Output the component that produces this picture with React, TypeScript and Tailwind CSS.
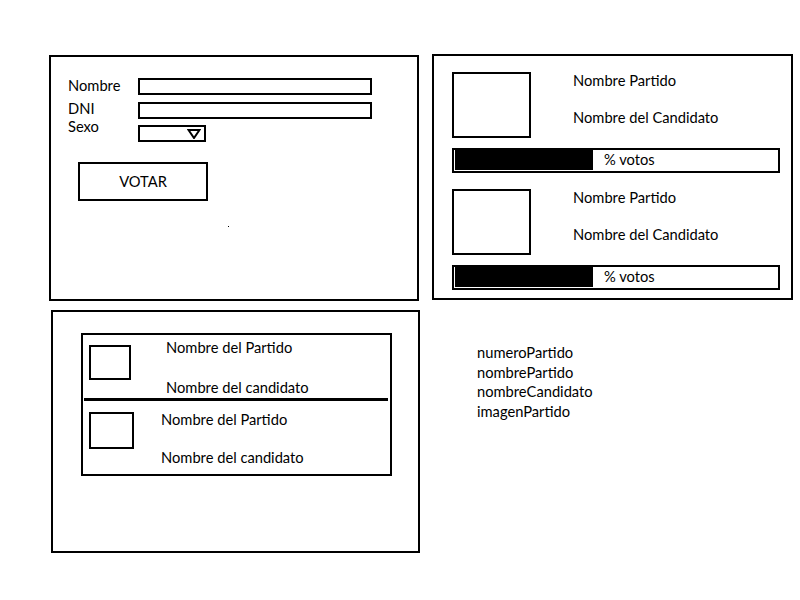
import React from 'react';

const font = { fontFamily: 'Lato, "Open Sans", sans-serif' };

function VoteBar({ percent }: { percent: number }) {
  return (
    <div className="flex w-[328px] h-[25px] border-2 border-black pl-[1px] pb-[1px]">
      <div className="h-full w-[138px] bg-black" />
      <span className="ml-[11px] leading-[19px] text-[14.7px]">% votos</span>
    </div>
  );
}

function ResultItem({ mt }: { mt: string }) {
  return (
    <div className={mt}>
      <div className="flex">
        <div className="w-[79px] h-[66px] border-2 border-black" />
        <div className="ml-[42px] -mt-[2px] flex flex-col leading-[20px] text-[14.7px]">
          <span>Nombre Partido</span>
          <span className="mt-[17px]">Nombre del Candidato</span>
        </div>
      </div>
      <div className="mt-[10px]">
        <VoteBar percent={42} />
      </div>
    </div>
  );
}

export default function App() {
  return (
    <div className="w-[800px] h-[600px] bg-white text-black" style={font}>
      <div className="pt-[54px]">
        {/* top row */}
        <div className="flex items-start pl-[49px]">
          {/* voting form */}
          <div className="w-[370px] h-[246px] mt-[1px] border-2 border-black">
            <div className="flex">
              <div className="ml-[17px] w-[70px] flex flex-col text-[14.7px] leading-[20px]">
                <span className="mt-[18px]">Nombre</span>
                <span className="mt-[3px]">DNI</span>
                <span className="-mt-[2px]">Sexo</span>
              </div>
              <div className="flex flex-col pt-[21px]">
                <div className="w-[234px] h-[17px] border-2 border-black" />
                <div className="mt-[7px] w-[234px] h-[17px] border-2 border-black" />
                <div className="mt-[6px] w-[68px] h-[17px] border-2 border-black flex items-center pl-[47px]">
                  <svg width="14" height="10" viewBox="0 0 14 10">
                    <polygon points="1.5,1 12.5,1 7,9" fill="none" stroke="black" strokeWidth="2" />
                  </svg>
                </div>
              </div>
            </div>
            <button className="mt-[20px] ml-[27px] w-[130px] h-[39px] border-2 border-black text-[14.7px] flex items-center justify-center">
              VOTAR
            </button>
            <div className="mt-[25px] ml-[177px] w-[1px] h-[1px] bg-black" />
          </div>

          {/* results */}
          <div className="ml-[13px] w-[361px] h-[246px] border-2 border-black px-[18px] pt-[16px]">
            <ResultItem mt="" />
            <ResultItem mt="mt-[16px]" />
          </div>
        </div>

        {/* bottom row */}
        <div className="flex items-start pl-[51px] mt-[9px]">
          <div className="w-[369px] h-[243px] border-2 border-black pt-[21px] pl-[28px]">
            <div className="w-[311px] h-[143px] border-2 border-black">
              <div className="flex">
                <div className="ml-[6px] mt-[10px] w-[42px] h-[35px] border-2 border-black" />
                <div className="ml-[35px] pt-[2px] flex flex-col text-[14.7px] leading-[20px]">
                  <span>Nombre del Partido</span>
                  <span className="mt-[20px]">Nombre del candidato</span>
                </div>
              </div>
              <div className="ml-[1px] mr-[2px] mt-[1px] h-[3px] bg-black" />
              <div className="flex">
                <div className="ml-[6px] mt-[11px] w-[45px] h-[37px] border-2 border-black" />
                <div className="ml-[27px] pt-[8px] flex flex-col text-[14.7px] leading-[20px]">
                  <span>Nombre del Partido</span>
                  <span className="mt-[18px]">Nombre del candidato</span>
                </div>
              </div>
            </div>
          </div>

          <div className="ml-[57px] mt-[33px] flex flex-col text-[14.7px] leading-[19.5px]">
            <span>numeroPartido</span>
            <span>nombrePartido</span>
            <span>nombreCandidato</span>
            <span>imagenPartido</span>
          </div>
        </div>
      </div>
    </div>
  );
}
